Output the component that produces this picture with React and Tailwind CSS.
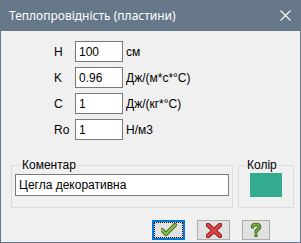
import React from 'react';

const rows = [
  { label: 'H', value: '100', unit: 'см' },
  { label: 'K', value: '0.96', unit: 'Дж/(м*с*°С)' },
  { label: 'C', value: '1', unit: 'Дж/(кг*°С)' },
  { label: 'Ro', value: '1', unit: 'Н/м3' },
];

const CheckIcon = () => (
  <svg width="16" height="14" viewBox="0 0 16 14">
    <path d="M1 7 L5 11 L14 2" fill="none" stroke="#3f6b1c" strokeWidth="4" strokeLinecap="round" strokeLinejoin="round" />
    <path d="M1 7 L5 11 L14 2" fill="none" stroke="#8cc152" strokeWidth="2" strokeLinecap="round" strokeLinejoin="round" />
  </svg>
);

const CrossIcon = () => (
  <svg width="16" height="15" viewBox="0 0 16 15">
    <path d="M2 2 L14 13 M14 2 L2 13" fill="none" stroke="#8f1c1c" strokeWidth="4.5" strokeLinecap="round" />
    <path d="M2 2 L14 13 M14 2 L2 13" fill="none" stroke="#e04545" strokeWidth="2.5" strokeLinecap="round" />
  </svg>
);

const HelpIcon = () => (
  <svg width="12" height="16" viewBox="0 0 12 16">
    <path d="M2.5 5 C2.5 1.5 9.5 1.5 9.5 5 C9.5 7.5 6 7.5 6 10" fill="none" stroke="#3d6b1a" strokeWidth="3.5" strokeLinecap="round" />
    <path d="M2.5 5 C2.5 1.5 9.5 1.5 9.5 5 C9.5 7.5 6 7.5 6 10" fill="none" stroke="#79b043" strokeWidth="1.6" strokeLinecap="round" />
    <circle cx="6" cy="13.5" r="1.8" fill="#4d8a22" />
  </svg>
);

export default function App() {
  return (
    <div
      className="w-[301px] h-[243px] flex flex-col bg-[#f0f0f0] border border-t-0 border-[#687889] overflow-hidden"
      style={{ fontFamily: '"Liberation Sans", Arial, sans-serif' }}
    >
      {/* title bar */}
      <div className="h-[31px] shrink-0 flex items-center justify-between bg-[#667789] pl-[8px] pr-[9px]">
        <span className="text-white text-[12px]" style={{ fontFamily: '"Noto Sans", sans-serif' }}>
          Теплопровідність (пластини)
        </span>
        <svg width="11" height="11" viewBox="0 0 11 11">
          <path d="M0.5 0.5 L10.5 10.5 M10.5 0.5 L0.5 10.5" stroke="#ffffff" strokeWidth="1.1" />
        </svg>
      </div>

      {/* parameter rows */}
      <div className="flex flex-col gap-[5px] pt-[10px] pl-[53px]">
        {rows.map((r) => (
          <div key={r.label} className="flex items-center h-[21px]">
            <span className="w-[21px] text-[12px] text-black">{r.label}</span>
            <div className="w-[48px] h-[21px] border border-[#7a7a7a] bg-white flex items-center pl-[3px] text-[12px] text-black">
              {r.value}
            </div>
            <span className="ml-[3px] text-[12px] text-black">{r.unit}</span>
          </div>
        ))}
      </div>

      {/* group boxes */}
      <div className="flex mt-[18px] pl-[10px] gap-[5px]">
        <fieldset className="w-[222px] h-[50px] border border-[#dcdcdc] px-[3px]">
          <legend className="ml-[5px] px-[2px] text-[12px] text-black leading-[14px]">Коментар</legend>
          <div className="mt-[2px] h-[22px] border border-[#7a7a7a] bg-white flex items-center pl-[3px] text-[12px] text-black">
            Цегла декоративна
          </div>
        </fieldset>
        <fieldset className="w-[56px] h-[50px] border border-[#dcdcdc]">
          <legend className="ml-[6px] px-[2px] text-[12px] text-black leading-[14px]">Колір</legend>
          <div className="flex justify-center mt-[1px]">
            <div className="w-[32px] h-[24px] bg-[#33ab8f]" />
          </div>
        </fieldset>
      </div>

      {/* buttons */}
      <div className="flex mt-[12px] pl-[151px] gap-[12px]">
        <button className="w-[33px] h-[20px] border-2 border-[#0078d7] bg-[#e1e1e1] flex items-center justify-center outline-1 outline-dotted outline-black -outline-offset-[3px]">
          <CheckIcon />
        </button>
        <button className="w-[33px] h-[20px] border border-[#adadad] bg-[#e1e1e1] flex items-center justify-center">
          <CrossIcon />
        </button>
        <button className="w-[28px] h-[20px] border border-[#adadad] bg-[#e1e1e1] flex items-center justify-center">
          <HelpIcon />
        </button>
      </div>
    </div>
  );
}
